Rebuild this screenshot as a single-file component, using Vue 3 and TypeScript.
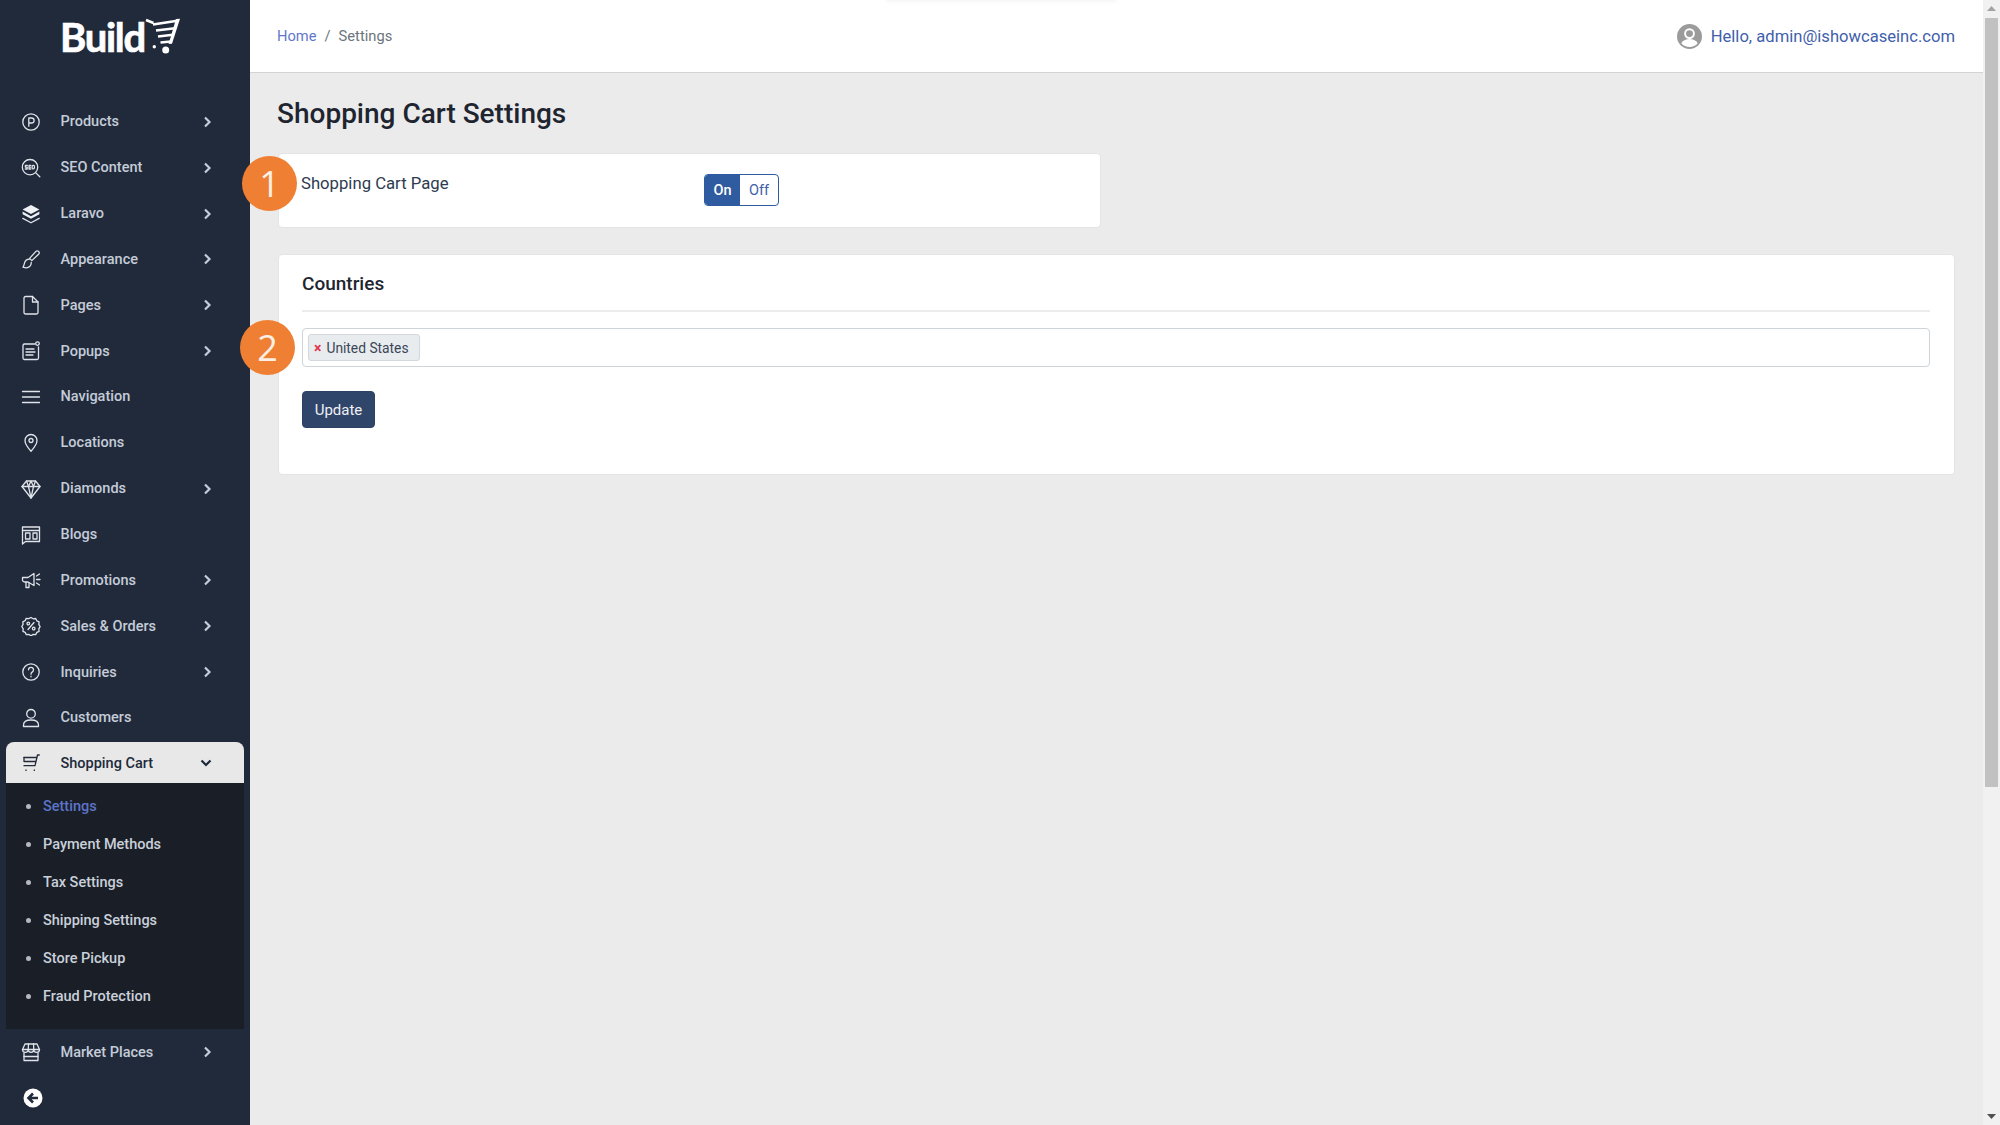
<script setup lang="ts">
interface NavItem {
  label: string
  arrow?: boolean
  strokes: string[]
  fills?: string[]
}

const topItems: NavItem[] = [
  { label: 'Products', arrow: true, strokes: ['M10 1.8a8.2 8.2 0 1 0 0 16.4a8.2 8.2 0 0 0 0-16.4z', 'M7.8 14.2V6h2.8a2.5 2.5 0 0 1 0 5H7.8'] },
  { label: 'SEO Content', arrow: true, strokes: ['M9 1.5a7.7 7.7 0 1 0 0 15.4a7.7 7.7 0 0 0 0-15.4z', 'M14.6 14.6l4.2 4.2', 'M6.3 7.4H4.4v1.8h1.8v1.8H4.3', 'M9.8 7.4H8v3.6h1.8M8 9.2h1.5', 'M12 7.4a1 1 0 0 1 1.4 1v1.4a1 1 0 0 1-2.3 0V8.4a1 1 0 0 1 .9-1z'] },
  { label: 'Laravo', arrow: true, strokes: ['M1.8 14.4l8.2 4.4 8.2-4.4'], fills: ['M10 1l8.4 4.4-8.4 4.6-8.4-4.6z', 'M1.6 7.600l8.400 4.600 8.400-4.600v2.600l-8.400 4.600-8.400-4.600z'] },
  { label: 'Appearance', arrow: true, strokes: ['M17.6 2.4a1.9 1.9 0 0 0-2.7 0L8.6 9.4l2.2 2.2 6.8-6.4a2 2 0 0 0 0-2.8z', 'M8.300 10.200c-2.600.2-4 1.300-4.600 3.200-.4 1.400-.8 3.600-1.700 4.800 2.500 1 5.400.6 6.700-.6 1.400-1.300 1.600-2.900 1.500-4.200'] },
  { label: 'Pages', arrow: true, strokes: ['M3 3a1.5 1.5 0 0 1 1.5-1.5h7L17 7v10.5a1.5 1.5 0 0 1-1.5 1.5h-11A1.5 1.5 0 0 1 3 17.500z', 'M11.500 1.500V7H17'] },
  { label: 'Popups', arrow: true, strokes: ['M14 3H3.500A1.500 1.500 0 0 0 2 4.500v12.500a1.500 1.500 0 0 0 1.500 1.500h12.500a1.500 1.500 0 0 0 1.500-1.500V6', 'M5 8h8M5 11h9M5 14h7', 'M16.500 .8a1.800 1.800 0 1 0 0 3.600a1.800 1.800 0 0 0 0-3.600z'] },
  { label: 'Navigation', strokes: ['M1.500 4.500h17M1.500 10h17M1.500 15.500h17'] },
  { label: 'Locations', strokes: ['M10 1.500a6 6 0 0 0-6 6c0 4 6 10.800 6 10.800s6-6.800 6-10.800a6 6 0 0 0-6-6z', 'M10 5.500a2 2 0 1 0 0 4a2 2 0 0 0 0-4z'] },
  { label: 'Diamonds', arrow: true, strokes: ['M5.500 2h9l4.500 5.500-9 11.500-9-11.500z', 'M1 7.500h18', 'M5.500 2l2 5.500L10 19l2.500-11.500 2-5.500', 'M7.500 7.500L10 2l2.500 5.500'] },
  { label: 'Blogs', strokes: ['M1.500 2h17v14.500H4.500l-3 2.500z', 'M1.500 5.500h17', 'M4.500 8h4.500v6H4.500z', 'M12 8h4v6h-4z'] },
  { label: 'Promotions', arrow: true, strokes: ['M1.500 7.500h5.500l6-4v12l-6-3.500H3.500a2 2 0 0 1-2-2z', 'M5 12v5.500h3V12.500', 'M15.500 6l3-2M15.500 9.500h3.500M15.500 13l3 2'] },
  { label: 'Sales & Orders', arrow: true, strokes: ['M10 1.500l2.200 1.300 2.500-.3 1.100 2.300 2.300 1.100-.3 2.500 1.300 2.200-1.300 2.200.3 2.500-2.300 1.100-1.100 2.300-2.500-.3-2.200 1.300-2.200-1.300-2.500.3-1.100-2.300-2.300-1.100.3-2.500L.8 10.500 2.100 8.300l-.3-2.500L4.100 4.700l1.100-2.300 2.500.3z', 'M13 6.500l-6 7', 'M7.300 6.200a1.300 1.300 0 1 0 0 2.600a1.300 1.300 0 0 0 0-2.600z', 'M12.700 11.200a1.300 1.300 0 1 0 0 2.600a1.300 1.300 0 0 0 0-2.600z'] },
  { label: 'Inquiries', arrow: true, strokes: ['M10 1.800a8.200 8.200 0 1 0 0 16.400a8.200 8.200 0 0 0 0-16.400z', 'M7.500 7.800a2.500 2.500 0 1 1 3.900 2.100c-.9.600-1.400 1.100-1.400 2.300', 'M10 14.200v.6'] },
  { label: 'Customers', strokes: ['M10 1.500a4.300 4.300 0 1 0 0 8.600a4.300 4.300 0 0 0 0-8.600z', 'M2.500 18.500v-1.500c0-3 3-5 7.500-5s7.500 2 7.500 5v1.500z'] },
]

const subItems = [
  { label: 'Settings', active: true },
  { label: 'Payment Methods' },
  { label: 'Tax Settings' },
  { label: 'Shipping Settings' },
  { label: 'Store Pickup' },
  { label: 'Fraud Protection' },
]

const marketIcon: string[] = [
  'M4 2h12l2.500 5.500H1.500z',
  'M1.500 7.500a2.800 2.800 0 0 0 5.700 0a2.800 2.800 0 0 0 5.600 0a2.800 2.800 0 0 0 5.700 0',
  'M3 11v7.500h14V11',
  'M3 14.500h14',
  'M7.500 2l-.3 5.500M12.500 2l.3 5.500',
]
</script>

<template>
  <div class="page">
    <aside class="sidebar">
      <div class="brand">
        <span class="brand-name">Build</span>
        <svg class="brand-cart" viewBox="0 0 36 36" width="36" height="36" aria-hidden="true">
          <path fill="none" stroke="#fff" stroke-width="2.600" d="M1 2l7.500 3M8 6.500L34 2.500M11 12.500l19-2.300M13 18.500l15-1.700M15.500 24.500l10.500-1" />
          <path fill="#fff" d="M31 1l4-.2-8 25-3.400.3z" />
          <circle cx="9.300" cy="28.700" r="1.700" fill="#fff" />
          <circle cx="20.700" cy="32" r="3.500" fill="#fff" />
        </svg>
      </div>

      <nav class="nav">
        <a v-for="item in topItems" :key="item.label" class="nav-row">
          <svg class="nav-icon" viewBox="0 0 20 20" aria-hidden="true">
            <path v-for="d in item.fills" :key="d" :d="d" class="icon-fill" />
            <path v-for="d in item.strokes" :key="d" :d="d" />
          </svg>
          <span class="nav-label">{{ item.label }}</span>
          <svg v-if="item.arrow" class="chevron" viewBox="0 0 10 12" aria-hidden="true">
            <path d="M3 1.500L7.500 6 3 10.500" />
          </svg>
        </a>

        <div class="group">
          <a class="nav-row group-head">
            <svg class="nav-icon" viewBox="0 0 20 20" aria-hidden="true">
              <path d="M3 4.500h12.500" />
              <path d="M3 4.500v4h11.500" />
              <path d="M3 12.700h11l2.500-10.700h1.800" />
              <path d="M5 17v.4M13.300 17v.4" />
            </svg>
            <span class="nav-label">Shopping Cart</span>
            <svg class="chevron-down" viewBox="0 0 12 10" aria-hidden="true">
              <path d="M1.500 2.500L6 7l4.500-4.500" />
            </svg>
          </a>
          <ul class="sub">
            <li v-for="sub in subItems" :key="sub.label" class="sub-row" :class="{ active: sub.active }">
              <span class="dot"></span>
              <span>{{ sub.label }}</span>
            </li>
          </ul>
        </div>

        <a class="nav-row">
          <svg class="nav-icon" viewBox="0 0 20 20" aria-hidden="true">
            <path v-for="d in marketIcon" :key="d" :d="d" />
          </svg>
          <span class="nav-label">Market Places</span>
          <svg class="chevron" viewBox="0 0 10 12" aria-hidden="true">
            <path d="M3 1.500L7.500 6 3 10.500" />
          </svg>
        </a>
      </nav>

      <svg class="back" viewBox="0 0 20 20" width="20" height="20" aria-hidden="true">
        <circle cx="10" cy="10" r="9.500" fill="#fff" />
        <path d="M15 10H6M10 5.500L5.500 10l4.500 4.500" fill="none" stroke="#212a3b" stroke-width="2.600" />
      </svg>
    </aside>

    <div class="main">
      <header class="topbar">
        <span class="top-shadow"></span>
        <div class="crumbs">
          <a class="crumb-link">Home</a>
          <span class="crumb-sep">/</span>
          <span class="crumb-now">Settings</span>
        </div>
        <div class="user">
          <svg class="avatar" viewBox="0 0 26 26" width="25" height="25" aria-hidden="true">
            <circle cx="13" cy="13" r="13" fill="#9b9b9b" />
            <circle cx="13" cy="10" r="4.600" fill="none" stroke="#fff" stroke-width="2" />
            <path d="M4.500 20c2-3.400 5-4.500 8.500-4.500s6.500 1.100 8.500 4.500a11 11 0 0 1-17 0z" fill="#fff" />
          </svg>
          <span>Hello, admin@ishowcaseinc.com</span>
        </div>
      </header>

      <main class="content">
        <h1 class="title">Shopping Cart Settings</h1>

        <section class="card card-page">
          <span class="badge badge-one">1</span>
          <span class="field-label">Shopping Cart Page</span>
          <div class="toggle">
            <span class="toggle-on">On</span>
            <span class="toggle-off">Off</span>
          </div>
        </section>

        <section class="card card-countries">
          <h2 class="card-title">Countries</h2>
          <div class="tag-input">
            <span class="badge badge-two">2</span>
            <span class="chip"><span class="chip-x">×</span>United States</span>
          </div>
          <button class="update" type="button">Update</button>
        </section>
      </main>
    </div>

    <div class="scrollbar">
      <svg viewBox="0 0 9 5" width="9" height="5" class="scroll-arrow" aria-hidden="true"><path d="M4.500 0L9 5H0z" fill="#a3a3a3" /></svg>
      <div class="scroll-thumb"></div>
      <svg viewBox="0 0 9 5" width="9" height="5" class="scroll-arrow" aria-hidden="true"><path d="M0 0h9L4.500 5z" fill="#505050" /></svg>
    </div>
  </div>
</template>

<style>
html, body { margin: 0; overflow: hidden; }
</style>

<style scoped>
.page {
  display: flex;
  width: 2000px;
  height: 1125px;
  overflow: hidden;
  font-family: Roboto, "Liberation Sans", sans-serif;
  background: #ebebeb;
}

/* sidebar */
.sidebar {
  width: 250px;
  flex: none;
  display: flex;
  flex-direction: column;
  background: #212a3b;
}
.brand {
  height: 99px;
  display: flex;
  align-items: flex-start;
  padding: 16px 0 0 60px;
  box-sizing: border-box;
}
.brand-name {
  width: 85px;
  font-family: Lato, Roboto, sans-serif;
  font-weight: 700;
  font-size: 40px;
  line-height: 42px;
  color: #fff;
  letter-spacing: -1.300px;
  -webkit-text-stroke: 0.700px #fff;
}
.brand-cart { margin: 2px 0 0 0; }
.nav { display: flex; flex-direction: column; }
.nav-row {
  display: flex;
  align-items: center;
  height: 45.85px;
  padding-left: 21px;
  color: #c4ccd8;
  font-size: 14.500px;
  font-weight: 500;
}
.nav-icon {
  width: 20px;
  height: 20px;
  flex: none;
  fill: none;
  stroke: #e0e4ea;
  stroke-width: 1.300;
  stroke-linejoin: round;
  stroke-linecap: round;
}
.icon-fill { fill: #eef0f4; stroke: none; }
.nav-label { margin-left: 19.500px; flex: 1; }
.chevron {
  width: 10px;
  height: 12px;
  margin-right: 38px;
  fill: none;
  stroke: #c4ccd8;
  stroke-width: 2.200;
}
.group { margin: 0 6px 0 6px; }
.group-head {
  height: 41px;
  box-sizing: border-box;
  margin-top: 1.500px;
  padding: 1px 0 0 15px;
  background: #e8e8e8;
  border-radius: 8px 8px 0 0;
  color: #212a3b;
}
.group-head .nav-icon { stroke: #212a3b; }
.chevron-down {
  width: 12px;
  height: 10px;
  margin-right: 32px;
  fill: none;
  stroke: #212a3b;
  stroke-width: 2.200;
}
.sub {
  list-style: none;
  margin: 0;
  padding: 4px 0 14px;
  background: #1a1f27;
}
.sub-row {
  display: flex;
  align-items: center;
  height: 38px;
  padding-left: 20px;
  color: #c9d0da;
  font-size: 14.500px;
  font-weight: 500;
}
.sub-row.active { color: #5c74c8; }
.dot {
  width: 5px;
  height: 5px;
  border-radius: 50%;
  background: #b5b8bd;
  margin-right: 12px;
}
.back { margin: 13px 0 0 22.500px; }

/* main */
.main { flex: 1; min-width: 0; display: flex; flex-direction: column; }
.topbar {
  position: relative;
  height: 73px;
  box-sizing: border-box;
  flex: none;
  display: flex;
  align-items: center;
  justify-content: space-between;
  padding: 0 28px 0 27px;
  background: #fff;
  border-bottom: 1px solid #d4d4d4;
  font-size: 14.700px;
}
.top-shadow {
  position: absolute;
  left: 636px;
  top: -2px;
  width: 230px;
  height: 4px;
  background: #f6f6f6;
  filter: blur(1.500px);
}
.crumbs { display: flex; gap: 8px; }
.crumb-link { color: #6277cb; }
.crumb-sep, .crumb-now { color: #6c757d; }
.user {
  display: flex;
  align-items: center;
  gap: 9px;
  color: #3f60ab;
  font-size: 16.600px;
}
.content {
  position: relative;
  padding: 24px 28px 0 27.500px;
}
.title {
  margin: 0 0 22px -0.500px;
  font-size: 28px;
  font-weight: 500;
  line-height: 34px;
  color: #1f2530;
}
.card {
  position: relative;
  background: #fff;
  border: 1px solid #e4e4e4;
  border-radius: 4px;
  box-sizing: border-box;
}
.card-page {
  width: 823px;
  height: 75px;
  display: flex;
  align-items: flex-start;
  padding: 20px 0 0 22.500px;
  margin-bottom: 26px;
}
.field-label {
  width: 403px;
  font-size: 16.700px;
  line-height: 20px;
  color: #2d3a4f;
}
.toggle {
  display: flex;
  height: 32px;
  box-sizing: border-box;
  border: 1px solid #2f5ba0;
  border-radius: 4px;
  overflow: hidden;
  font-size: 14.500px;
  font-weight: 500;
}
.toggle-on {
  width: 35px;
  background: #2f5ba0;
  color: #fff;
  text-align: center;
  line-height: 31px;
}
.toggle-off {
  width: 38px;
  color: #3f60ab;
  text-align: center;
  line-height: 31px;
  font-weight: 400;
}
.card-countries {
  height: 221px;
  padding: 19px 24px 0 23.500px;
}
.card-title {
  margin: 0 0 16px;
  padding-bottom: 15px;
  font-size: 19px;
  font-weight: 500;
  line-height: 20px;
  color: #1f2530;
  border-bottom: 2px solid #ececec;
  height: 21px;
}
.tag-input {
  position: relative;
  height: 39px;
  box-sizing: border-box;
  border: 1px solid #ced4da;
  border-radius: 4px;
  padding: 5px;
  display: flex;
  align-items: flex-start;
}
.chip {
  display: inline-flex;
  align-items: center;
  height: 27px;
  box-sizing: border-box;
  padding: 0 10px 0 5px;
  background: #e9ecef;
  border: 1px solid #d3d7dc;
  border-radius: 3px;
  font-size: 13.800px;
  color: #3a4656;
}
.chip-x { color: #e0364c; font-weight: 700; margin-right: 5px; font-size: 14px; }
.update {
  display: block;
  margin-top: 24px;
  width: 73px;
  height: 37px;
  border: 1px solid #2d4263;
  border-radius: 4px;
  background: #30456a;
  color: #eef0f4;
  font-family: inherit;
  font-size: 15px;
  font-weight: 400;
  padding: 0;
}
.badge {
  position: absolute;
  width: 55px;
  height: 55px;
  border-radius: 50%;
  background: #ef8033;
  color: #fbeee3;
  font-family: "Open Sans", sans-serif;
  font-size: 36px;
  line-height: 55px;
  text-align: center;
}
.badge-one { left: -36.500px; top: 2px; }
.badge-two { left: -63px; top: -9px; }

/* scrollbar */
.scrollbar {
  width: 17px;
  flex: none;
  background: #f1f1f1;
  display: flex;
  flex-direction: column;
  align-items: center;
  justify-content: space-between;
  padding: 6px 0;
  box-sizing: border-box;
  position: relative;
}
.scroll-thumb {
  position: absolute;
  left: 2px;
  right: 2px;
  top: 18px;
  height: 769px;
  background: #c1c1c1;
}
</style>
